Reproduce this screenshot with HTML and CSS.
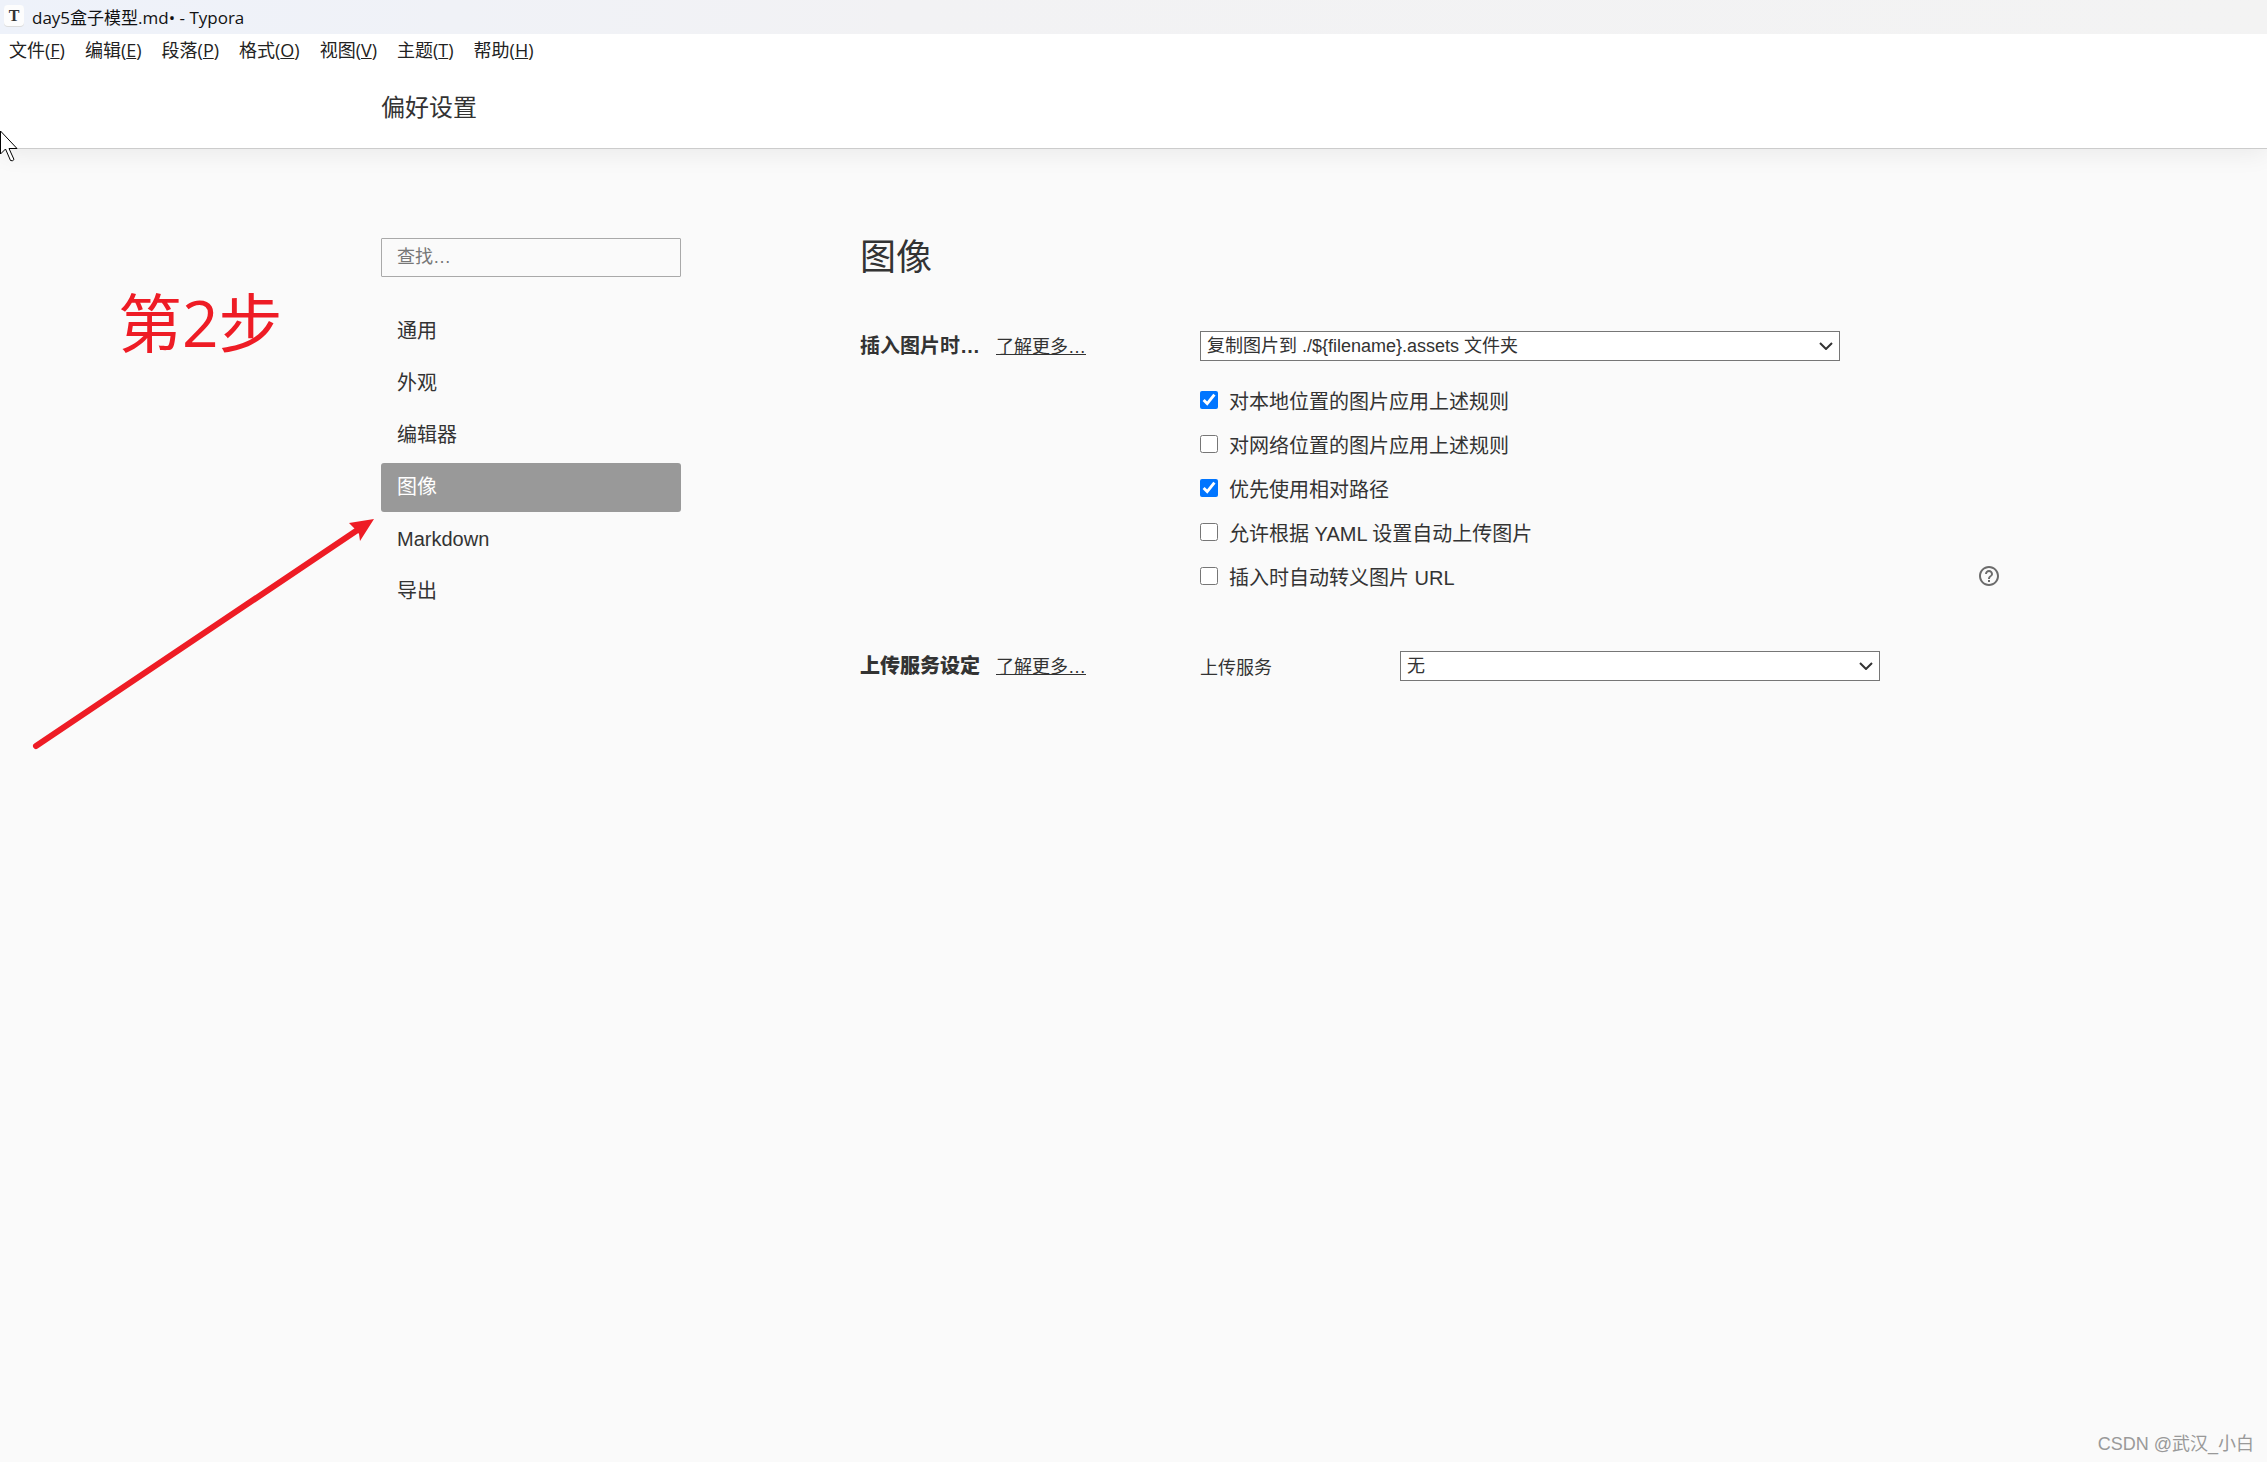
FILE: index.html
```html
<!DOCTYPE html>
<html lang="zh-CN">
<head>
  <meta charset="UTF-8" />
  <meta name="viewport" content="width=device-width, initial-scale=1.0" />
  <title>day5盒子模型.md• - Typora</title>
  <link rel="stylesheet" href="styles.css">
</head>
<body>
<div class="title-bar">
  <svg class="app-icon" viewBox="0 0 22 22" aria-hidden="true">
    <rect x="1" y="1" width="20" height="21" rx="4" fill="#dcdcdc" />
    <rect x="1" y="0" width="20" height="21" rx="4" fill="#fdfdfd" />
    <text x="11" y="16" text-anchor="middle" class="app-letter">T</text>
  </svg>
  <span>day5盒子模型.md• - Typora</span>
</div>
<nav class="menu-bar">
  <button>文件(<u>F</u>)</button>
  <button>编辑(<u>E</u>)</button>
  <button>段落(<u>P</u>)</button>
  <button>格式(<u>O</u>)</button>
  <button>视图(<u>V</u>)</button>
  <button>主题(<u>T</u>)</button>
  <button>帮助(<u>H</u>)</button>
</nav>
<header class="page-header">偏好设置</header>

<div class="content">
  <aside class="sidebar">
    <input type="text" class="search" placeholder="查找…" aria-label="查找">
    <nav class="side-nav">
      <a href="#general">通用</a>
      <a href="#appearance">外观</a>
      <a href="#editor">编辑器</a>
      <a href="#image" class="active">图像</a>
      <a href="#markdown">Markdown</a>
      <a href="#export">导出</a>
    </nav>
  </aside>

  <main class="panel" id="image">
    <h1>图像</h1>
    <section class="group">
      <div class="group-title">
        <label for="insert-action">插入图片时…</label>
        <a href="#insert-help">了解更多…</a>
      </div>
      <div class="group-body">
        <div class="select-wrap wide">
          <select id="insert-action">
            <option>复制图片到 ./${filename}.assets 文件夹</option>
          </select>
          <svg class="chevron" viewBox="0 0 14 8"><path d="M1 1l6 6 6-6" /></svg>
        </div>
        <div class="options">
          <div class="option">
            <label><input type="checkbox" checked>对本地位置的图片应用上述规则</label>
          </div>
          <div class="option">
            <label><input type="checkbox">对网络位置的图片应用上述规则</label>
          </div>
          <div class="option">
            <label><input type="checkbox" checked>优先使用相对路径</label>
          </div>
          <div class="option">
            <label><input type="checkbox">允许根据 YAML 设置自动上传图片</label>
          </div>
          <div class="option">
            <label><input type="checkbox">插入时自动转义图片 URL</label>
            <button class="help" aria-label="帮助">
              <svg viewBox="0 0 24 24"><path d="M11 18h2v-2h-2v2zm1-16C6.48 2 2 6.48 2 12s4.48 10 10 10 10-4.48 10-10S17.52 2 12 2zm0 18c-4.41 0-8-3.59-8-8s3.59-8 8-8 8 3.59 8 8-3.59 8-8 8zm0-14c-2.21 0-4 1.79-4 4h2c0-1.1.9-2 2-2s2 .9 2 2c0 2-3 1.75-3 5h2c0-2.25 3-2.5 3-5 0-2.21-1.79-4-4-4z" /></svg>
            </button>
          </div>
        </div>
      </div>
    </section>

    <section class="group">
      <div class="group-title">
        <strong>上传服务设定</strong>
        <a href="#upload-help">了解更多…</a>
      </div>
      <div class="group-body upload">
        <label for="upload-service">上传服务</label>
        <div class="select-wrap">
          <select id="upload-service">
            <option>无</option>
          </select>
          <svg class="chevron" viewBox="0 0 14 8"><path d="M1 1l6 6 6-6" /></svg>
        </div>
      </div>
    </section>
  </main>
</div>

<!-- annotations on top of the window -->
<div class="step">第2步</div>
<svg class="arrow" viewBox="0 0 350 240" aria-hidden="true">
  <path d="M6 232L326 17" stroke="#ee1c25" stroke-width="6" stroke-linecap="round" />
  <path d="M344 5L319 9l5 5 5 6 1 7z" fill="#ee1c25" />
</svg>
<svg class="cursor" viewBox="0 0 19 32" aria-hidden="true">
  <path d="M.5 1v23l5-5 5 11.500q2 1 3.500-1l-5-11h8z" fill="#fff" stroke="#000" />
</svg>
<div class="watermark">CSDN @武汉_小白</div>
</body>
</html>
```
FILE: styles.css
```css
* {
  box-sizing: border-box;
}
body {
  min-height: 100vh;
  margin: 0;
  position: relative;
  overflow-x: hidden;
  background: #fafafa;
  color: #333;
  font-family: "Liberation Sans", "Noto Sans CJK SC", sans-serif;
  font-size: 20px;
}
button {
  padding: 0;
  background: none;
  border: none;
  color: inherit;
  font: inherit;
}
.title-bar {
  height: 34px;
  padding: 0 3px 2px;
  display: flex;
  align-items: center;
  gap: 7px;
  background: linear-gradient(90deg, #eef2fa, #f2f2f4 40%, #f3f3f3);
  color: #111;
  font-family: "Open Sans", "Noto Sans CJK SC", sans-serif;
  font-size: 17px;
}
.app-icon {
  width: 22px;
  height: 22px;
}
.app-letter {
  font-family: "Liberation Serif", serif;
  font-size: 16px;
  font-weight: 700;
  fill: #333;
}
.menu-bar {
  height: 34px;
  padding: 0 9px 4px;
  position: relative;
  z-index: 1;
  display: flex;
  align-items: center;
  gap: 20px;
  background: white;
  color: #222;
  font-family: "Open Sans", "Noto Sans CJK SC", sans-serif;
  font-size: 18px;
}
.page-header {
  height: 81px;
  padding-left: 381px;
  line-height: 80px;
  background: white;
  border-bottom: 1px solid #ccc;
  box-shadow: 0 4px 24px rgba(0, 0, 0, 0.07);
  font-size: 24px;
}

.content {
  padding: 89px 267px 0 381px;
  display: grid;
  grid-template-columns: 300px 1fr;
  gap: 179px;
}
.search {
  width: 100%;
  height: 39px;
  padding: 0 15px;
  background: transparent;
  border: 1px solid #a9a9a9;
  border-radius: 1px;
  font-family: inherit;
  font-size: 18px;
}
.search::placeholder {
  color: #777;
}
.side-nav {
  margin-top: 30px;
  display: flex;
  flex-direction: column;
  gap: 3px;
}
.side-nav a {
  height: 49px;
  padding-left: 16px;
  border-radius: 3px;
  color: #333;
  line-height: 49px;
  text-decoration: none;
}
.side-nav .active {
  background: #999;
  color: white;
}

h1 {
  margin: 0 0 53px;
  font-size: 36px;
  font-weight: 400;
  line-height: 40px;
}
.group {
  margin-bottom: 53px;
  display: grid;
  grid-template-columns: 340px 1fr;
}
.group-title {
  height: 27px;
  display: flex;
  align-items: center;
  gap: 16px;
  font-weight: 700;
}
.group-title a {
  color: #333;
  font-size: 18px;
  font-weight: 400;
}
.select-wrap {
  width: 60%;
  position: relative;
}
.wide {
  width: 80%;
}
select {
  width: 100%;
  height: 30px;
  padding: 0 6px;
  display: block;
  appearance: none;
  background: white;
  border: 1px solid #767676;
  border-radius: 0;
  color: #333;
  font-family: inherit;
  font-size: 18px;
}
.chevron {
  width: 14px;
  height: 8px;
  position: absolute;
  top: 11px;
  right: 7px;
  fill: none;
  stroke: #333;
  stroke-width: 2;
  pointer-events: none;
}
.options {
  padding-top: 17px;
}
.option {
  height: 44px;
  display: flex;
  align-items: center;
  justify-content: space-between;
}
.option label {
  display: flex;
  align-items: center;
}
.option input {
  width: 18px;
  height: 18px;
  margin: 0 11px 0 0;
  accent-color: #0075ff;
}
.help {
  width: 24px;
  height: 24px;
  margin-right: -1px;
}
.help svg {
  width: 24px;
  height: 24px;
  display: block;
  fill: #6b6b6b;
}
.upload {
  display: flex;
  align-items: center;
}
.upload label {
  width: 25%;
  font-size: 18px;
}

.step {
  position: absolute;
  top: 275px;
  left: 118px;
  color: #ee1c25;
  font-family: "Open Sans", "Noto Sans CJK SC", sans-serif;
  font-size: 64px;
  line-height: 96px;
}
.arrow {
  width: 350px;
  height: 240px;
  position: absolute;
  top: 514px;
  left: 30px;
}
.cursor {
  width: 19px;
  height: 32px;
  position: absolute;
  top: 130px;
  left: 0;
}
.watermark {
  position: absolute;
  right: 13px;
  bottom: 7px;
  color: #999;
  font-size: 18px;
}
```
